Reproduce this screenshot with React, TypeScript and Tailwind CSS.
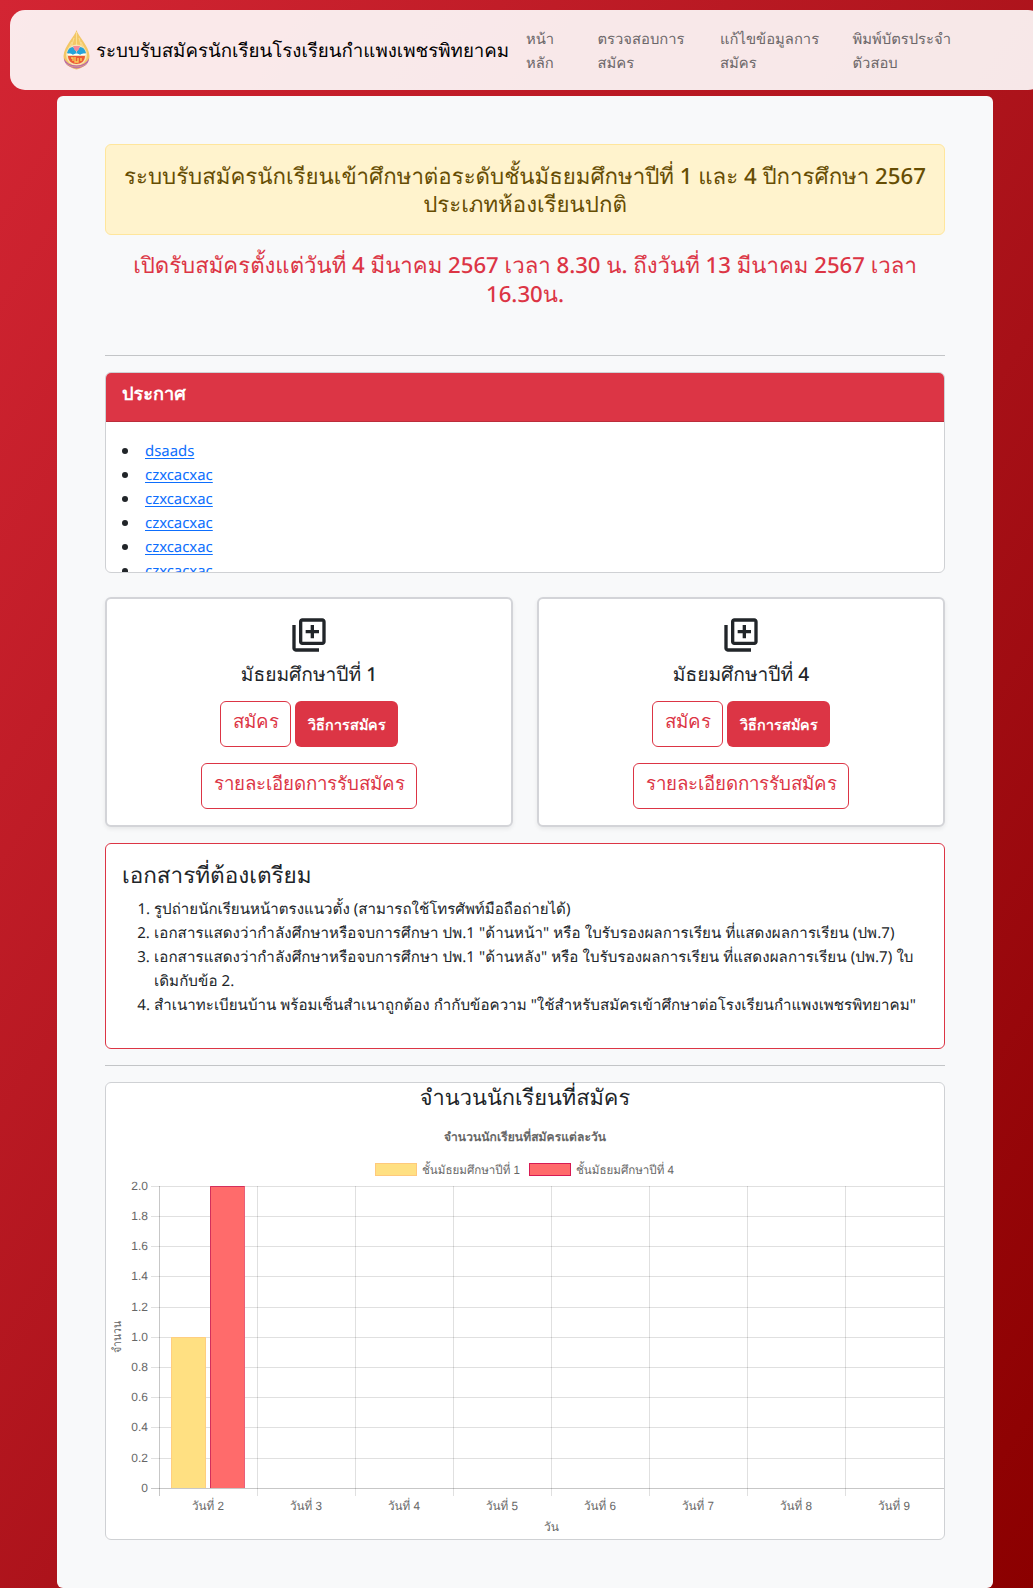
const navItems = [
  { lines: ["หน้า", "หลัก"], cls: "w-[71.5px]" },
  { lines: ["ตรวจสอบการ", "สมัคร"], cls: "w-[122.5px]" },
  { lines: ["แก้ไขข้อมูลการ", "สมัคร"], cls: "w-[132.5px]" },
  { lines: ["พิมพ์บัตรประจำ", "ตัวสอบ"], cls: "w-[110px]" },
];

const notices = ["dsaads", "czxcacxac", "czxcacxac", "czxcacxac", "czxcacxac", "czxcacxac"];

const days = [2, 3, 4, 5, 6, 7, 8, 9];
const ticks = ["2.0", "1.8", "1.6", "1.4", "1.2", "1.0", "0.8", "0.6", "0.4", "0.2", "0"];
const rowY = [104.5, 134.5, 164.5, 194.5, 225.5, 255.5, 285.5, 315.5, 345.5, 376.5, 406.5];

function SchoolLogo() {
  return (
    <svg className="h-10 w-[27px] shrink-0" viewBox="0 0 27 40">
      <path d="M13.5 0C12 6 1 16 .5 26c0 7 5 11.500 13 13.500 8-2 13-6.500 13-13.500C26 16 15 6 13.500 0Z" fill="#f3c766" />
      <path d="M13.500 2v14M11 8 8 18M16 8l3 10M9 12 5 20M18 12l4 8" stroke="#fbe3a0" strokeWidth=".8" fill="none" />
      <circle cx="13.500" cy="25" r="10.500" fill="#f7e3b4" />
      <path d="M4 23c1-4 3-6 6-6l3 4 .5 3-4 1ZM23 23c-1-4-3-6-6-6l-3 4-.5 3 4 1Z" fill="#27a3d8" />
      <path d="M10 16h7l-1.500 4-2 1.500-2-1.500Z" fill="#f58a9b" />
      <path d="M4 25c3-3 5-1 6 0 2-2 5-2 7 0 1-1 4-3 6 0Z" fill="#fff" />
      <path d="M5 26h17c0 5-4 8-8.500 8S5 31 5 26Z" fill="#ee5b35" />
      <path d="M8 28h2v3M12 27v5h3v-4M18 28v3" stroke="#f9d35c" strokeWidth="1.300" fill="none" />
      <path d="M1 28c1.500 4.500 6.500 7.500 12.500 7.500s11-3 12.500-7.500c0 6-5 9.500-12.500 10.500C6 37.500 1 34 1 28Z" fill="#b765ad" />
      <path d="M3 33.500c5 4.500 16 4.500 21 0" stroke="#eebf72" strokeWidth=".6" fill="none" />
    </svg>
  );
}

function LibraryAddIcon() {
  return (
    <svg className="size-10" viewBox="0 0 24 24" fill="#212529">
      <path d="M4 6H2v14c0 1.100.9 2 2 2h14v-2H4V6zm16-4H8c-1.100 0-2 .9-2 2v12c0 1.100.9 2 2 2h12c1.100 0 2-.9 2-2V4c0-1.100-.9-2-2-2zm0 14H8V4h12v12zm-7-2h2v-3h3V9h-3V6h-2v3h-3v2h3v3z" />
    </svg>
  );
}

function LevelCard({ level }: { level: number }) {
  return (
    <section className="flex h-[230px] flex-col items-center rounded-md border-2 border-[#d3d4d8] bg-white pt-4 shadow-[0_2px_4px_rgba(0,0,0,0.075)]">
      <LibraryAddIcon />
      <h5 className="mt-[7px] h-6 text-[19.200px] leading-6 font-medium">มัธยมศึกษาปีที่ {level}</h5>
      <div className="mt-[15px] flex gap-1">
        <button className="h-[46px] w-[71px] rounded-md border border-[#dc3545] pb-[7px] text-[18.700px] leading-6 text-[#dc3545]">สมัคร</button>
        <button className="h-[46px] w-[103px] rounded-md bg-[#dc3545] pt-px text-[14.300px] font-semibold text-white">วิธีการสมัคร</button>
      </div>
      <button className="mt-4 h-[46px] w-[216px] rounded-md border border-[#dc3545] pb-[7px] text-[18.700px] leading-6 text-[#dc3545]">รายละเอียดการรับสมัคร</button>
    </section>
  );
}

function Chart() {
  return (
    <svg className="absolute inset-x-0 -top-px h-[457px] w-[838px]" viewBox="0 0 838 457" fill="#666" fontFamily="'Liberation Sans', 'Noto Sans', sans-serif" fontSize="12">
      <text x="419" y="59" textAnchor="middle" fontWeight="700" textLength="162">จำนวนนักเรียนที่สมัครแต่ละวัน</text>
      <rect x="269.500" y="81.500" width="41" height="12" fill="#ffe082" stroke="#ffc97c" />
      <text x="316" y="92" textLength="98" lengthAdjust="spacingAndGlyphs">ชั้นมัธยมศึกษาปีที่ 1</text>
      <rect x="423.500" y="81.500" width="41" height="12" fill="#ff6b6b" stroke="#d81b53" />
      <text x="470" y="92" textLength="98" lengthAdjust="spacingAndGlyphs">ชั้นมัธยมศึกษาปีที่ 4</text>
      {rowY.map((y, i) => (
        <g key={y}>
          <path d={`M45 ${y}H838`} stroke="#000" strokeOpacity={i === 10 ? 0.22 : 0.12} />
          <text x="42" y={y + 3.5} textAnchor="end">{ticks[i]}</text>
        </g>
      ))}
      {days.map((d, i) => (
        <g key={d}>
          <path d={`M${53.5 + i * 98} 104V414`} stroke="#000" strokeOpacity={i === 0 ? 0.22 : 0.12} />
          <text x={102 + i * 98} y="428" textAnchor="middle" textLength="32" lengthAdjust="spacingAndGlyphs">วันที่ {d}</text>
        </g>
      ))}
      <rect x="65" y="255" width="35" height="151" fill="#ffe082" />
      <path d="M65.500 406V255.500H99.500V406" stroke="#ffce80" fill="none" />
      <rect x="104" y="104" width="35" height="302" fill="#ff6b6b" />
      <path d="M104.500 406V104.500H138.500" stroke="#d32f5c" fill="none" />
      <path d="M138.500 105V406" stroke="#e9607a" fill="none" />
      <text x="445.500" y="449" textAnchor="middle">วัน</text>
      <text x="0" y="0" textAnchor="middle" textLength="32" lengthAdjust="spacingAndGlyphs" transform="translate(14.500 255) rotate(-90)">จำนวน</text>
    </svg>
  );
}

export default function App() {
  return (
    <div className="h-[1588px] overflow-hidden bg-linear-to-br from-[#d32533] to-[#8b0000] pt-[10px] font-['Noto_Sans',sans-serif] text-[15.100px] leading-6 text-[#212529] [text-rendering:geometricPrecision]">
      <header className="ml-[10px] flex h-20 w-[1033px] items-center rounded-[15px] bg-white/90 pl-[53px]">
        <SchoolLogo />
        <span className="ml-[6px] w-[430px] pt-[2px] text-[18.700px] whitespace-nowrap text-black">ระบบรับสมัครนักเรียนโรงเรียนกำแพงเพชรพิทยาคม</span>
        <nav className="flex pt-[2px] text-[14.800px] text-[#6b6668]">
          {navItems.map((item) => (
            <a key={item.lines[0]} className={`${item.cls} whitespace-nowrap`}>
              {item.lines[0]}
              <br />
              {item.lines[1]}
            </a>
          ))}
        </nav>
      </header>

      <main className="mt-[6px] ml-[57px] h-[1492px] w-[936px] rounded-md bg-[#f8f9fa] p-12">
        <h4 className="flex h-[91px] flex-col justify-center rounded-md border border-[#ffe69c] bg-[#fff3cd] text-center text-[22.250px] leading-7 font-medium whitespace-nowrap text-[#664d03]">
          <span>ระบบรับสมัครนักเรียนเข้าศึกษาต่อระดับชั้นมัธยมศึกษาปีที่ 1 และ 4 ปีการศึกษา 2567</span>
          <span>ประเภทห้องเรียนปกติ</span>
        </h4>
        <h4 className="mt-4 flex h-[104px] flex-col text-center text-[22.200px] leading-[28.500px] font-medium whitespace-nowrap text-[#dc3545]">
          <span>เปิดรับสมัครตั้งแต่วันที่ 4 มีนาคม 2567 เวลา 8.30 น. ถึงวันที่ 13 มีนาคม 2567 เวลา</span>
          <span>16.30น.</span>
        </h4>
        <hr className="border-t border-[#c3c5c7]" />

        <section className="mt-4 h-[201px] overflow-hidden rounded-md border border-[#cfd1d4] bg-white">
          <h5 className="h-[49px] border-b border-[#bb2d3b] bg-[#dc3545] px-4 pt-[9px] text-[18.200px] leading-6 font-semibold text-white">ประกาศ</h5>
          <ul className="pt-[17px] pl-4 text-[14.900px]">
            {notices.map((n, i) => (
              <li key={i} className="flex h-6 items-center">
                <span className="mr-[17px] size-[6px] rounded-full bg-[#212529]" />
                <a className="text-[#0d6efd] underline underline-offset-2">{n}</a>
              </li>
            ))}
          </ul>
        </section>

        <div className="mt-6 grid grid-cols-2 gap-6">
          <LevelCard level={1} />
          <LevelCard level={4} />
        </div>

        <section className="mt-4 h-[206px] rounded-md border border-[#dc3545] bg-white px-4 pt-4">
          <h4 className="h-[37px] text-[22.500px] leading-[29px]">เอกสารที่ต้องเตรียม</h4>
          <ol className="ml-8 list-decimal whitespace-nowrap">
            <li>รูปถ่ายนักเรียนหน้าตรงแนวตั้ง (สามารถใช้โทรศัพท์มือถือถ่ายได้)</li>
            <li className="tracking-[0.080px]">เอกสารแสดงว่ากำลังศึกษาหรือจบการศึกษา ปพ.1 "ด้านหน้า" หรือ ใบรับรองผลการเรียน ที่แสดงผลการเรียน (ปพ.7)</li>
            <li className="tracking-[0.080px]">
              เอกสารแสดงว่ากำลังศึกษาหรือจบการศึกษา ปพ.1 "ด้านหลัง" หรือ ใบรับรองผลการเรียน ที่แสดงผลการเรียน (ปพ.7) ใบ
              <br />
              เดิมกับข้อ 2.
            </li>
            <li className="tracking-[0.030px]">สำเนาทะเบียนบ้าน พร้อมเซ็นสำเนาถูกต้อง กำกับข้อความ "ใช้สำหรับสมัครเข้าศึกษาต่อโรงเรียนกำแพงเพชรพิทยาคม"</li>
          </ol>
        </section>

        <hr className="mt-4 border-t border-[#c3c5c7]" />

        <section className="relative mt-4 h-[458px] rounded-md border border-[#cfd1d4] bg-white">
          <h4 className="text-center text-[21.800px] leading-[30px]">จำนวนนักเรียนที่สมัคร</h4>
          <Chart />
        </section>
      </main>
    </div>
  );
}
